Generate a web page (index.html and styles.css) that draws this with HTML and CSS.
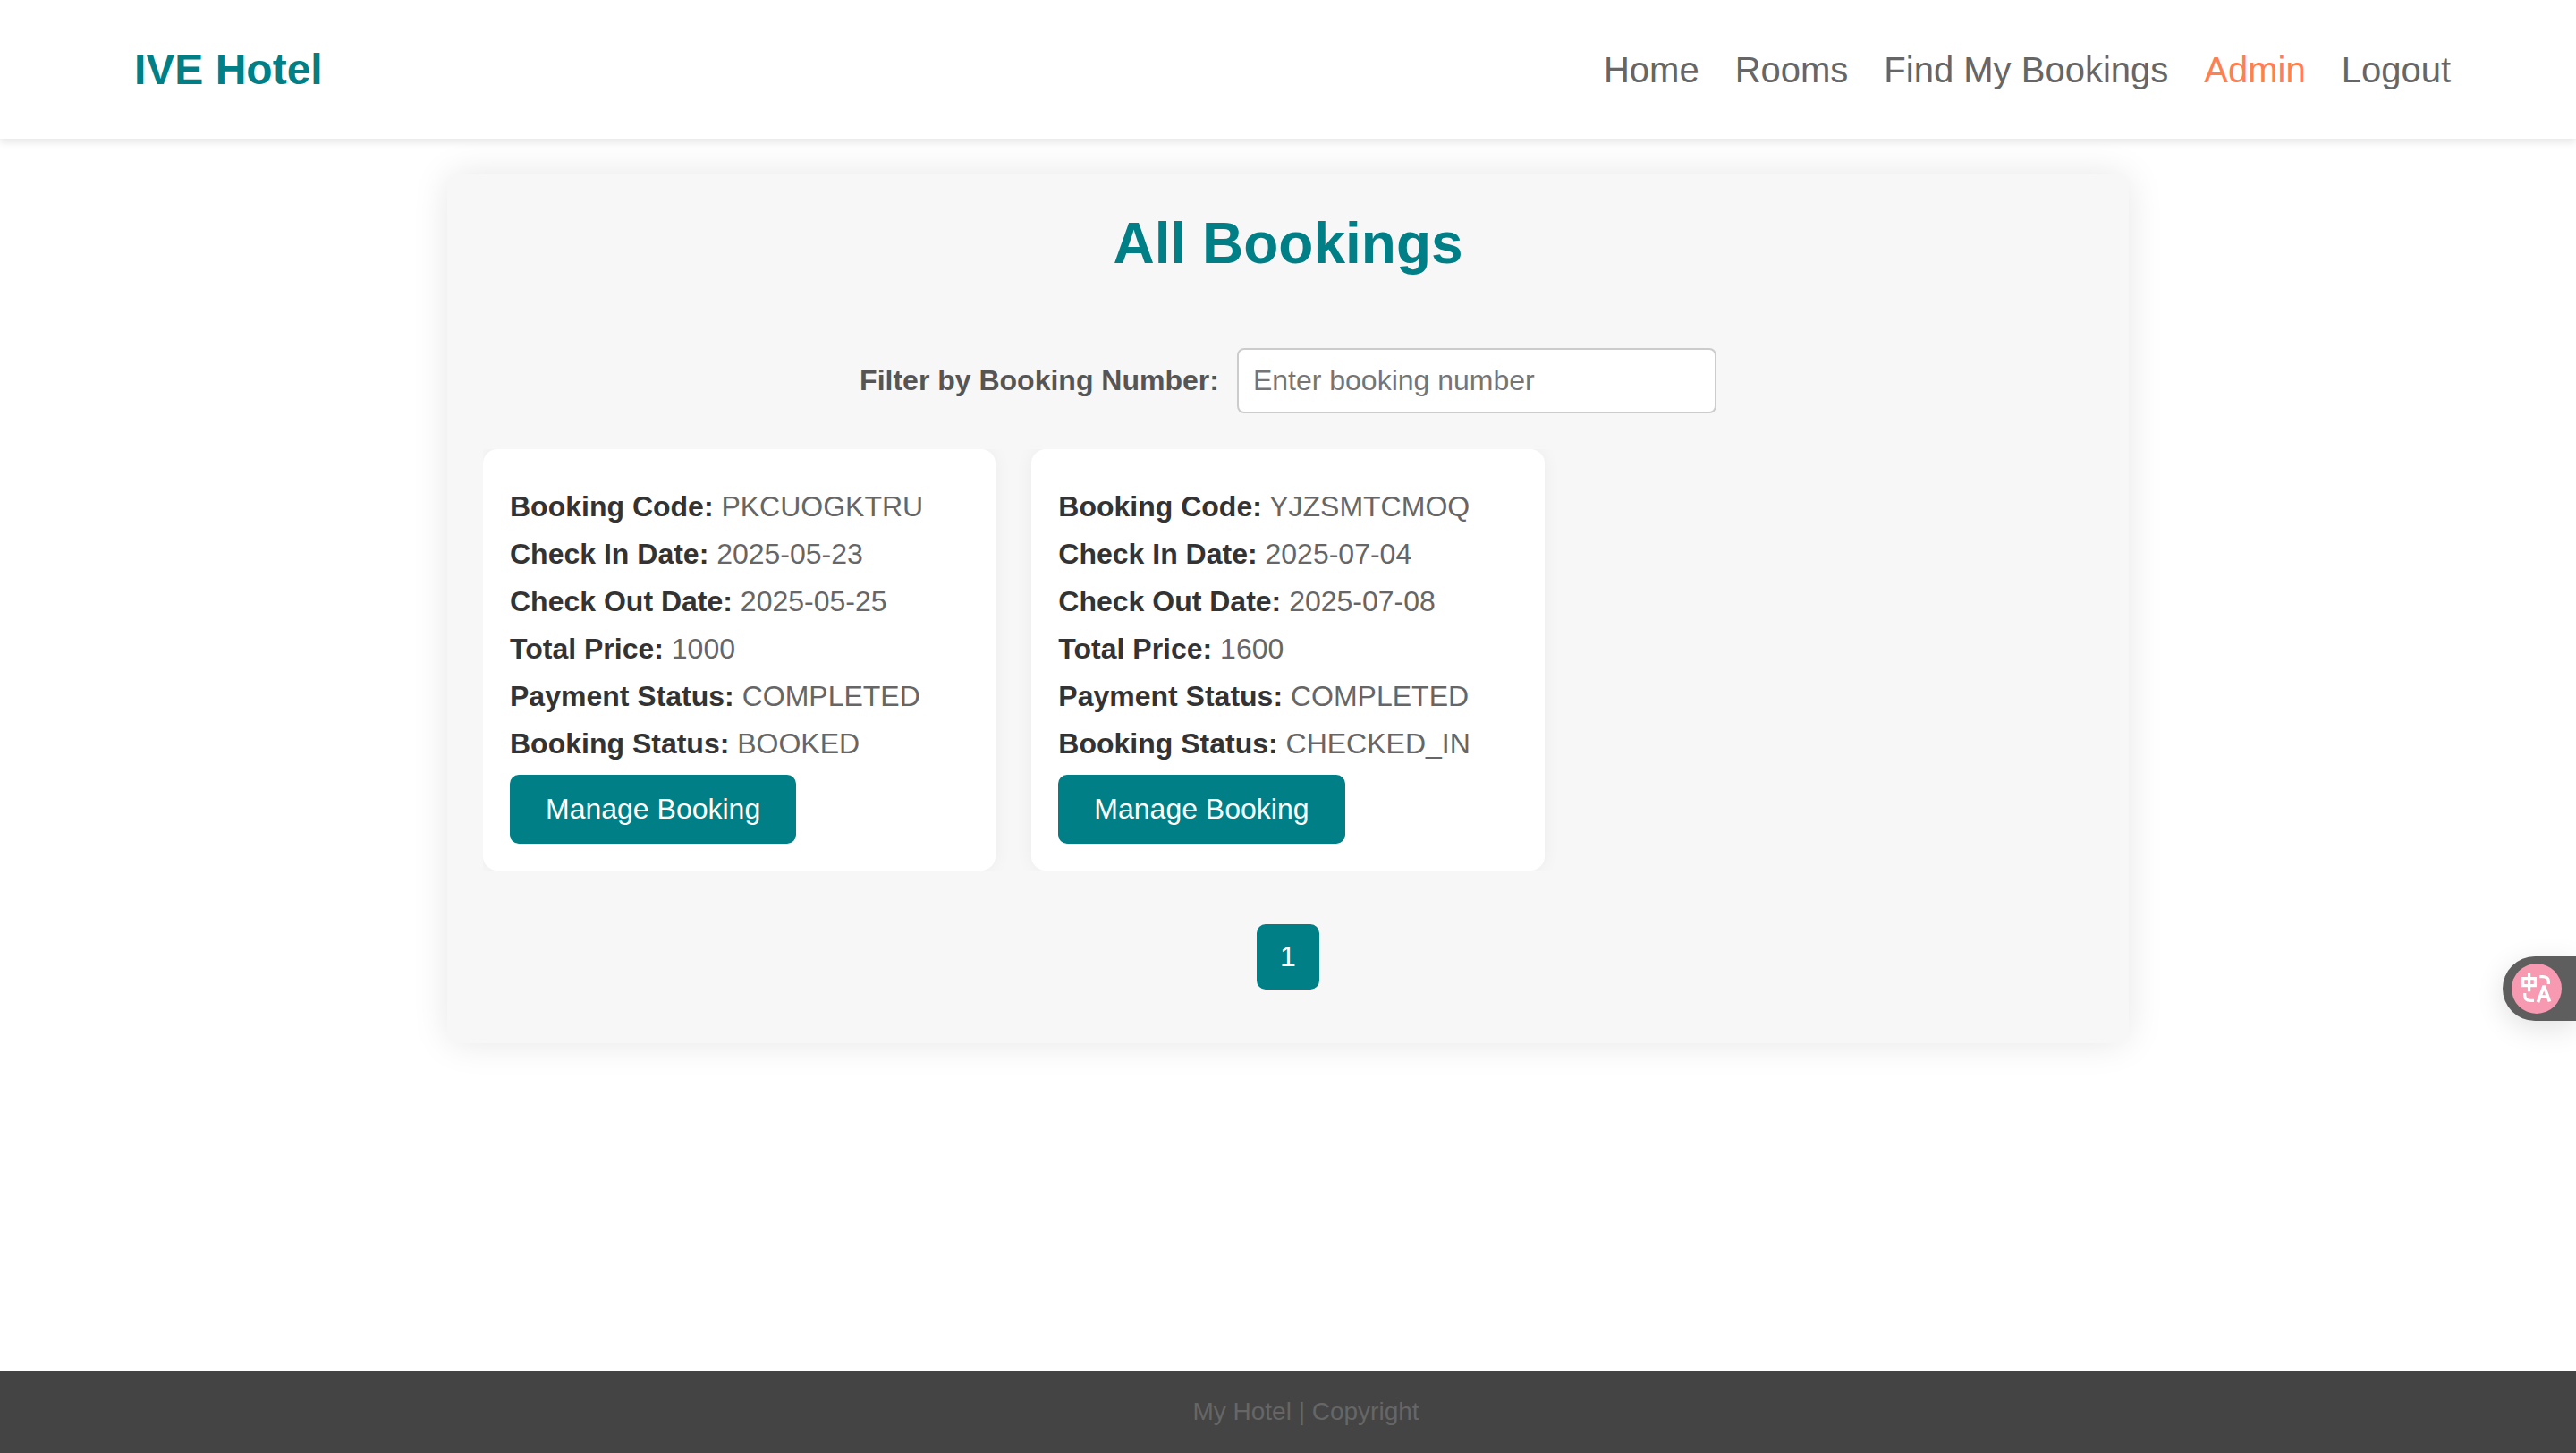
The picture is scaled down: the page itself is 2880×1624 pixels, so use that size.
FILE: index.html
```html
<!DOCTYPE html>
<html lang="en">
<head>
<meta charset="utf-8">
<meta name="viewport" content="width=device-width, initial-scale=1">
<title>IVE Hotel</title>
<link rel="stylesheet" href="styles.css">
</head>
<body>
<header class="navbar">
  <a class="brand" href="#">IVE Hotel</a>
  <nav>
    <ul class="nav-list">
      <li><a class="nav-link" href="#">Home</a></li>
      <li><a class="nav-link" href="#">Rooms</a></li>
      <li><a class="nav-link" href="#">Find My Bookings</a></li>
      <li><a class="nav-link active" href="#">Admin</a></li>
      <li><a class="nav-link" href="#">Logout</a></li>
    </ul>
  </nav>
</header>
<main class="content">
  <section class="bookings">
    <h1 class="title">All Bookings</h1>
    <div class="filter">
      <label class="filter-label" for="booking-number">Filter by Booking Number:</label>
      <input class="filter-input" id="booking-number" type="text" placeholder="Enter booking number">
    </div>
    <div class="results">
      <article class="card">
        <p><strong>Booking Code:</strong> PKCUOGKTRU</p>
        <p><strong>Check In Date:</strong> 2025-05-23</p>
        <p><strong>Check Out Date:</strong> 2025-05-25</p>
        <p><strong>Total Price:</strong> 1000</p>
        <p><strong>Payment Status:</strong> COMPLETED</p>
        <p><strong>Booking Status:</strong> BOOKED</p>
        <button class="manage" type="button">Manage Booking</button>
      </article>
      <article class="card">
        <p><strong>Booking Code:</strong> YJZSMTCMOQ</p>
        <p><strong>Check In Date:</strong> 2025-07-04</p>
        <p><strong>Check Out Date:</strong> 2025-07-08</p>
        <p><strong>Total Price:</strong> 1600</p>
        <p><strong>Payment Status:</strong> COMPLETED</p>
        <p><strong>Booking Status:</strong> CHECKED_IN</p>
        <button class="manage" type="button">Manage Booking</button>
      </article>
    </div>
    <div class="pagination">
      <button class="page-button" type="button">1</button>
    </div>
  </section>
</main>
<footer class="footer">My Hotel | Copyright</footer>
<button class="translate" type="button" aria-label="Translate">
  <svg class="translate-icon" viewBox="0 0 56 56" aria-hidden="true">
    <circle cx="28" cy="28" r="28" fill="#f799b1"/>
    <g fill="none" stroke="#fff" stroke-width="3.300">
      <path d="M12.700 16.700H26.400V24.700H12.700ZM19.600 11V31.300"/>
      <path d="M31.300 14.700H34.500Q41.300 14.700 41.300 20V23"/>
      <path d="M14.700 33V35.500Q14.700 41.300 21 41.300H25"/>
      <path d="M29.500 43.200L35.800 26H36.600L42.500 42.500M32 37H40.500" stroke-width="3.700"/>
    </g>
  </svg>
</button>
</body>
</html>
```
FILE: styles.css
```css
* {
  box-sizing: border-box;
}

body {
  margin: 0;
  min-height: 100vh;
  display: flex;
  flex-direction: column;
  background: #fff;
  color: #666;
  font-family: Arial, "Liberation Sans", sans-serif;
  font-size: 32px;
}

button,
input {
  font: inherit;
}

.navbar {
  display: flex;
  justify-content: space-between;
  align-items: center;
  padding: 50px 140px 50px 150px;
  background: #fff;
  box-shadow: 0 4px 8px rgba(0, 0, 0, 0.1);
}

.brand {
  color: #007f86;
  font-size: 48px;
  font-weight: bold;
  line-height: 55px;
  text-decoration: none;
}

.nav-list {
  display: flex;
  gap: 40px;
  margin: 0;
  padding: 0;
  font-size: 40px;
  line-height: 46px;
  list-style: none;
}

.nav-link {
  display: block;
  color: #666;
  text-decoration: none;
}

.nav-link.active {
  color: #ff7f50;
}

.content {
  flex: 1;
  padding: 40px;
}

.bookings {
  max-width: 1880px;
  margin: 0 auto;
  padding: 40px 40px 60px;
  border-radius: 16px;
  background: #f7f7f7;
  box-shadow: 0 0 40px rgba(0, 0, 0, 0.1);
}

.title {
  margin: 0 0 80px;
  color: #007f86;
  font-size: 64px;
  line-height: 74px;
  text-align: center;
}

.filter {
  display: flex;
  justify-content: center;
  align-items: center;
  gap: 20px;
  margin-bottom: 40px;
}

.filter-label {
  color: #555;
  font-weight: bold;
}

.filter-input {
  width: 536px;
  height: 73px;
  padding: 16px;
  border: 2px solid #ccc;
  border-radius: 8px;
  background: #fff;
  color: #333;
}

.filter-input::placeholder {
  color: #757575;
}

.results {
  display: grid;
  grid-template-columns: repeat(3, 1fr);
  gap: 40px;
  overflow: hidden;
}

.card {
  padding: 30px;
  border-radius: 16px;
  background: #fff;
  box-shadow: 0 0 20px rgba(0, 0, 0, 0.05);
}

.card p {
  margin: 16px 0;
  line-height: 37px;
}

.card strong {
  color: #333;
}

.manage {
  display: block;
  padding: 20px 40px;
  border: 0;
  border-radius: 10px;
  background: #007f86;
  color: #fff;
  line-height: 37px;
}

.pagination {
  display: flex;
  justify-content: center;
  margin-top: 60px;
}

.page-button {
  padding: 16px 24px;
  border: 2px solid #007f86;
  border-radius: 10px;
  background: #007f86;
  color: #fff;
  line-height: 37px;
}

.footer {
  padding: 30px 0 30px 40px;
  background: #444;
  color: #666;
  font-size: 28px;
  line-height: 32px;
  text-align: center;
}

.translate {
  position: fixed;
  top: 1069px;
  right: 0;
  display: flex;
  align-items: center;
  width: 82px;
  height: 72px;
  padding: 0 0 0 10px;
  border: 0;
  border-radius: 36px 0 0 36px;
  background: #5e5e5e;
  box-shadow: 0 8px 32px rgba(0, 0, 0, 0.12);
}

.translate-icon {
  width: 56px;
  height: 56px;
}
```
